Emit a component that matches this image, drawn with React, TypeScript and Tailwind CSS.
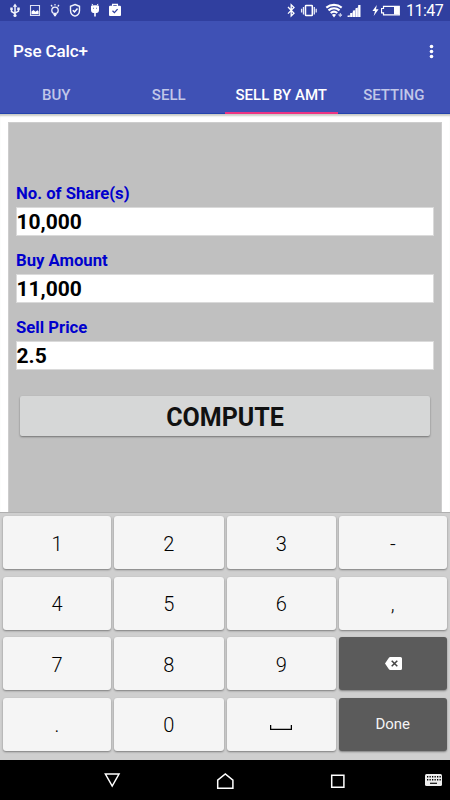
import React from "react";

type GlyphProps = { box: string; className: string; children: React.ReactNode };

function Glyph({ box, className, children }: GlyphProps) {
  return (
    <svg viewBox={box} className={`block shrink-0 ${className}`} fill="none" stroke="none">
      {children}
    </svg>
  );
}

function StatusBar() {
  return (
    <div className="flex h-[21px] justify-between bg-[#303f9f] text-white">
      <div className="flex pl-[9px]">
        <Glyph box="9 0 12 21" className="h-[21px] w-3">
          <path d="M15 6v10M11.5 8.5v3l3.5 2.2M18.5 8.5v2.6L15 13.2" stroke="#f0f2fb" strokeWidth="1.5" />
          <path d="M15 3.600l2.200 3.200h-4.400zM10.300 7.600h2.400v2.400h-2.400zM17.300 7.600h2.400v2.400h-2.400z" fill="#f0f2fb" />
          <circle cx="15" cy="15.500" r="1.600" fill="#f0f2fb" />
        </Glyph>
        <Glyph box="29 0 12 21" className="ml-2 h-[21px] w-3">
          <path d="M30.500 5.500h9v9.900h-9z" stroke="#dfe2f4" strokeWidth="1.100" />
          <path d="M31.500 14v-2.600l2-1.500 2 1.800 1.900-1.400 1.200.9V14z" fill="#fff" />
        </Glyph>
        <Glyph box="49 0 12 21" className="ml-2 h-[21px] w-3">
          <circle cx="55" cy="10.300" r="3.200" stroke="#f0f2fb" strokeWidth="1.300" />
          <path d="M53.300 14.300h3.400M53.900 15.700h2.200M55 3.900v1.500M51 5l1.300 1.500M59 5l-1.300 1.500" stroke="#f0f2fb" strokeWidth="1.200" />
        </Glyph>
        <Glyph box="69 0 12 21" className="ml-2 h-[21px] w-3">
          <path d="M75 4.500l4.500 1.800v4.100c0 2.900-1.900 4.900-4.500 5.800-2.600-.9-4.500-2.900-4.500-5.800V6.300z" stroke="#f0f2fb" strokeWidth="1.400" />
          <path d="M72.800 10.200l1.700 1.700 3-3.500" stroke="#fff" strokeWidth="1.500" />
        </Glyph>
        <Glyph box="89 0 12 21" className="ml-2 h-[21px] w-3">
          <path d="M91 6.500c0-1 .8-1.300 1.500-.8.900-.7 4.100-.7 5 0 .7-.5 1.500-.2 1.500.8v3.600c0 1.800-1.100 3-2.500 3h-.7v3.300h-1.600v-3.300h-.7c-1.400 0-2.500-1.200-2.500-3z" fill="#fff" />
          <path d="M92 3.900l1.100 2M98 3.900l-1.100 2" stroke="#fff" strokeWidth="1" />
          <path d="M93 7.700h1v1h-1zM96 7.700h1v1h-1z" fill="#6570ba" />
        </Glyph>
        <Glyph box="108 0 14 21" className="ml-[7px] h-[21px] w-3.5">
          <path d="M112.600 6V4.400h4.800V6" stroke="#fff" strokeWidth="1.300" />
          <rect x="109" y="5.800" width="12" height="10.100" rx="1" fill="#fff" />
          <path d="M112.500 10.700l1.900 1.900 3.200-3.500" stroke="#303f9f" strokeWidth="1.300" />
        </Glyph>
      </div>
      <div className="flex pr-[7px]">
        <Glyph box="286 0 10 21" className="h-[21px] w-2.5">
          <path d="M288 7l6 6.200-2.800 2.800V4.800l2.800 2.600-6 6.200" stroke="#fff" strokeWidth="1.300" />
        </Glyph>
        <Glyph box="300 0 18 21" className="ml-1 h-[21px] w-[18px]">
          <rect x="305.500" y="5.500" width="6.800" height="10" rx=".6" stroke="#fff" strokeWidth="1.500" />
          <path d="M303.500 7v7.500M314.300 7v7.500M301.600 8.800v3.800M316.200 8.800v3.800" stroke="#e6e9f7" strokeWidth="1.300" />
        </Glyph>
        <Glyph box="325 0 18 21" className="ml-[7px] h-[21px] w-[18px]">
          <path d="M326.300 7.600c4.500-3.600 10.900-3.600 15.400 0M328.500 10.400c3.300-2.700 7.700-2.700 11 0M330.700 13c2-1.700 4.600-1.700 6.600 0" stroke="#fff" strokeWidth="2.100" />
          <path d="M331.900 14.700q2.100-1.400 4.200 0L334 17.500z" fill="#fff" />
          <path d="M340.300 13v3.500l-1.700-1.600h3.300l-1.600 1.600" stroke="#cdd2ee" strokeWidth="1" />
        </Glyph>
        <Glyph box="347 0 14 21" className="ml-1 h-[21px] w-3.5">
          <path d="M347.500 17l12.800-12.200V17z" fill="#8e97d0" />
          <path d="M347.600 15.500h2V17h-2zM350.200 13h2.100v4h-2.100zM352.900 10.500h2.100V17h-2.100zM355.600 7.900h2.100V17h-2.100zM358.200 5h2.200v12h-2.200z" fill="#fff" />
        </Glyph>
        <Glyph box="372 0 7 21" className="ml-[11px] h-[21px] w-[7px]">
          <path d="M376.800 5l-4.400 6h2.600l-1.300 5 4.900-6.800H376z" fill="#fff" />
        </Glyph>
        <Glyph box="381 0 20 21" className="ml-0.5 h-[21px] w-5">
          <path d="M383.500 6.300h15.800v8.500h-15.800v-2h-2V8.500h2z" stroke="#fff" strokeWidth="1.200" />
          <path d="M394 6.500h5v8h-5z" fill="#fff" />
        </Glyph>
        <span className="ml-[5px] w-[37px] text-[16px] leading-[22px] tracking-[-0.550px] whitespace-nowrap">11:47</span>
      </div>
    </div>
  );
}

const tabs = ["BUY", "SELL", "SELL BY AMT", "SETTING"];

function Header() {
  return (
    <header className="shrink-0 bg-[#3f51b5]">
      <StatusBar />
      <div className="flex h-[59px] items-center justify-between pt-px pr-4 pl-[13px]">
        <h1 className="text-[17px] leading-6 font-medium tracking-[-0.100px] text-white">Pse Calc+</h1>
        <Glyph box="0 0 5 15" className="h-[15px] w-[5px]">
          <g fill="#fff">
            <circle cx="2.500" cy="2.500" r="1.800" />
            <circle cx="2.500" cy="7.500" r="1.800" />
            <circle cx="2.500" cy="12.500" r="1.800" />
          </g>
        </Glyph>
      </div>
      <nav className="grid h-[34px] grid-cols-4">
        {tabs.map((tab) => (
          <div
            key={tab}
            className={
              tab === "SELL BY AMT"
                ? "border-b-2 border-[#ec3483] text-center text-[15px] leading-[30px] font-medium whitespace-nowrap text-white"
                : "border-b border-[#2443ad] text-center text-[15px] leading-[30px] font-medium whitespace-nowrap text-[#c1c7e8]"
            }
          >
            {tab}
          </div>
        ))}
      </nav>
    </header>
  );
}

const fields = [
  { label: "No. of Share(s)", value: "10,000" },
  { label: "Buy Amount", value: "11,000" },
  { label: "Sell Price", value: "2.5" },
];

function Form() {
  return (
    <main className="h-[398px] shrink-0 bg-white px-2 shadow-[inset_0_3px_2px_-1px_#c9cbc6]">
      <div className="h-2" />
      <div className="h-[390px] border border-b-0 border-[#cdcdcd] bg-[#c0c0c0] px-[7px] pt-[59px]">
        {fields.map(({ label, value }) => (
          <div key={label} className="h-[67px]">
            <div className="h-[25px] text-[16.700px] leading-[23px] font-bold text-[#0000cd]">{label}</div>
            <div className="h-[29px] border border-[#dadada] bg-white text-[21px] leading-[28px] font-bold text-black">
              <span className="-ml-[0.500px]">{value}</span>
            </div>
          </div>
        ))}
        <div className="mx-1 mt-[13px] h-10 rounded-[2px] bg-[#d6d7d7] text-center text-[25px] leading-[43px] font-bold text-[#111] shadow-[0_1px_2px_rgba(0,0,0,0.4)]">
          COMPUTE
        </div>
      </div>
    </main>
  );
}

function BackspaceIcon() {
  return (
    <Glyph box="0 0 17 13" className="ml-px h-[13px] w-[17px]">
      <path d="M5.300 0H15.500Q17 0 17 1.500v10Q17 13 15.500 13H5.300q-.9 0-1.400-.8L0 6.500 3.900.8Q4.400 0 5.300 0z" fill="#fff" />
      <path d="M6.700 3.700l5.600 5.600M12.300 3.700L6.700 9.300" stroke="#444" strokeWidth="1.500" />
    </Glyph>
  );
}

function SpaceIcon() {
  return (
    <Glyph box="0 0 22 5" className="mt-1 h-[5px] w-[22px]">
      <path d="M.6 0v4.300h20.800V0" stroke="#000" strokeWidth="1.300" />
    </Glyph>
  );
}

const keys = ["1", "2", "3", "-", "4", "5", "6", ",", "7", "8", "9", "back", ".", "0", "space", "Done"];

function Keypad() {
  return (
    <section className="grid h-[248px] shrink-0 grid-cols-[108px_109.500px_109.500px_107.500px] grid-rows-[repeat(4,53px)] gap-x-[3px] gap-y-[7.600px] border-t border-[#b0b0b0] bg-[#cfcfcf] pt-[3px] pl-[3px]">
      {keys.map((k) => {
        const dark = k === "back" || k === "Done";
        return (
          <div
            key={k}
            className={
              dark
                ? "flex items-center justify-center rounded-[3px] bg-[#5b5b5b] text-[15px] text-[#f4f4f4] shadow-[0_1px_2px_rgba(0,0,0,0.4)]"
                : "flex items-center justify-center rounded-[3px] bg-[#f5f5f5] pt-0.5 text-xl font-[350] text-black shadow-[0_1px_2px_rgba(0,0,0,0.4)]"
            }
          >
            {k === "back" ? <BackspaceIcon /> : k === "space" ? <SpaceIcon /> : k}
          </div>
        );
      })}
    </section>
  );
}

const keyDots = [427, 429.5, 432, 434.5, 437, 439.5];

function NavBar() {
  return (
    <footer className="flex h-10 shrink-0 bg-black">
      <Glyph box="102 760 20 40" className="ml-[102px] h-10 w-5">
        <path d="M105.400 774h13.600l-6.800 12z" stroke="#fff" strokeWidth="1.500" />
      </Glyph>
      <Glyph box="215 760 20 40" className="ml-[93px] h-10 w-5">
        <path d="M217.700 788.200v-8l7.600-6.300 7.600 6.300v8z" stroke="#fff" strokeWidth="1.500" />
      </Glyph>
      <Glyph box="328 760 20 40" className="ml-[93px] h-10 w-5">
        <path d="M331.700 775.200h12.200v12h-12.200z" stroke="#fff" strokeWidth="1.500" />
      </Glyph>
      <Glyph box="424 760 20 40" className="ml-[76px] h-10 w-5">
        <rect x="425" y="774" width="17" height="12" rx="1.500" fill="#eee" />
        {keyDots.map((x) => (
          <path key={x} d={`M${x} 776h1.300v1.500h-1.300zM${x} 779h1.300v1.500h-1.300z`} fill="#000" />
        ))}
        <path d="M430 783.300h7" stroke="#111" strokeWidth="1.200" />
      </Glyph>
    </footer>
  );
}

export default function App() {
  return (
    <div className="flex h-[800px] w-[450px] flex-col overflow-hidden bg-white font-[Roboto,sans-serif]">
      <Header />
      <Form />
      <Keypad />
      <NavBar />
    </div>
  );
}
